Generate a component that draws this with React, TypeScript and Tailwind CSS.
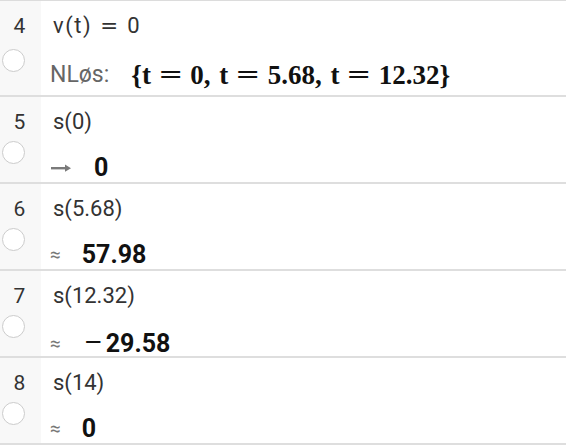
import React from 'react'

type Row = {
    id: number;
    input: React.ReactNode;
    output: React.ReactNode;
    tall?: boolean;
}

function Arrow() {
    return (
        <svg width="22" height="10" viewBox="0 0 22 10" className="mr-[22px]">
            <rect x="1" y="4" width="16" height="2.4" fill="#7a7a7a" />
            <polygon points="15,1.5 21,5.2 15,8.8" fill="#7a7a7a" />
        </svg>
    )
}

function Approx() {
    return <span className="text-[19px] text-[#777] mr-[21px] leading-none">≈</span>
}

function Value({ children }: { children: React.ReactNode }) {
    return <span className="text-[25px] font-bold text-[#111] leading-none flex items-center">{children}</span>
}

function Eq() {
    return <span className="inline-block mx-[12px] scale-x-150">=</span>
}

const rows: Row[] = [
    {
        id: 4,
        tall: true,
        input: (
            <>
                <span className="tracking-[1.5px]">v(t)</span>
                <span className="inline-block ml-[11px] mr-[12px] scale-x-150">=</span>0
            </>
        ),
        output: (
            <div className="flex items-center">
                <span className="text-[23px] text-[#666] mr-[22px]">NLøs:</span>
                <span className="text-[27px] leading-[30px] font-bold text-[#111] font-['Liberation_Serif',serif] whitespace-pre">
                    {'{t'}<Eq />{'0, '}<span className="ml-[2px]">t</span><Eq />{'5.68, '}<span className="ml-[2px]">t</span><Eq />{'12.32}'}
                </span>
            </div>
        ),
    },
    { id: 5, input: 's(0)', output: <div className="flex items-center"><Arrow /><Value>0</Value></div> },
    { id: 6, input: 's(5.68)', output: <div className="flex items-center"><Approx /><Value>57.98</Value></div> },
    {
        id: 7,
        input: 's(12.32)',
        output: (
            <div className="flex items-center">
                <Approx />
                <Value>
                    <span className="inline-block font-normal text-[28px] ml-[3px] mr-[5px] scale-x-125">−</span>29.58
                </Value>
            </div>
        ),
    },
    { id: 8, input: 's(14)', output: <div className="flex items-center"><Approx /><Value>0</Value></div> },
]

export default function App() {
    return (
        <div className="w-[566px] h-[448px] bg-white overflow-hidden font-['Roboto',sans-serif] text-[#333]">
            <div className="border-t border-[#dcdcdc]">
                {rows.map((row) => (
                    <div
                        key={row.id}
                        className={`flex border-b-2 border-[#dedede] ${row.tall ? 'h-[96px]' : 'h-[87px]'}`}
                    >
                        <div className="w-[41px] shrink-0 bg-[#f8f8f8] flex flex-col items-center">
                            <span className="mt-[13px] text-[21px] leading-[24px] text-[#333] ml-[-2px]">{row.id}</span>
                            <span
                                className={`${row.tall ? 'mt-[11px]' : 'mt-[7px]'} ml-[-14px] w-[23px] h-[23px] rounded-full border-[1.5px] border-[#cccccc] bg-white`}
                            ></span>
                        </div>
                        <div className="flex-1 pl-[12px] flex flex-col">
                            <div className="mt-[13px] text-[22px] leading-[24px] text-[#333]">{row.input}</div>
                            <div className={`${row.tall ? 'mt-[20px]' : 'mt-[21px]'} ml-[-3px]`}>{row.output}</div>
                        </div>
                    </div>
                ))}
            </div>
        </div>
    )
}
